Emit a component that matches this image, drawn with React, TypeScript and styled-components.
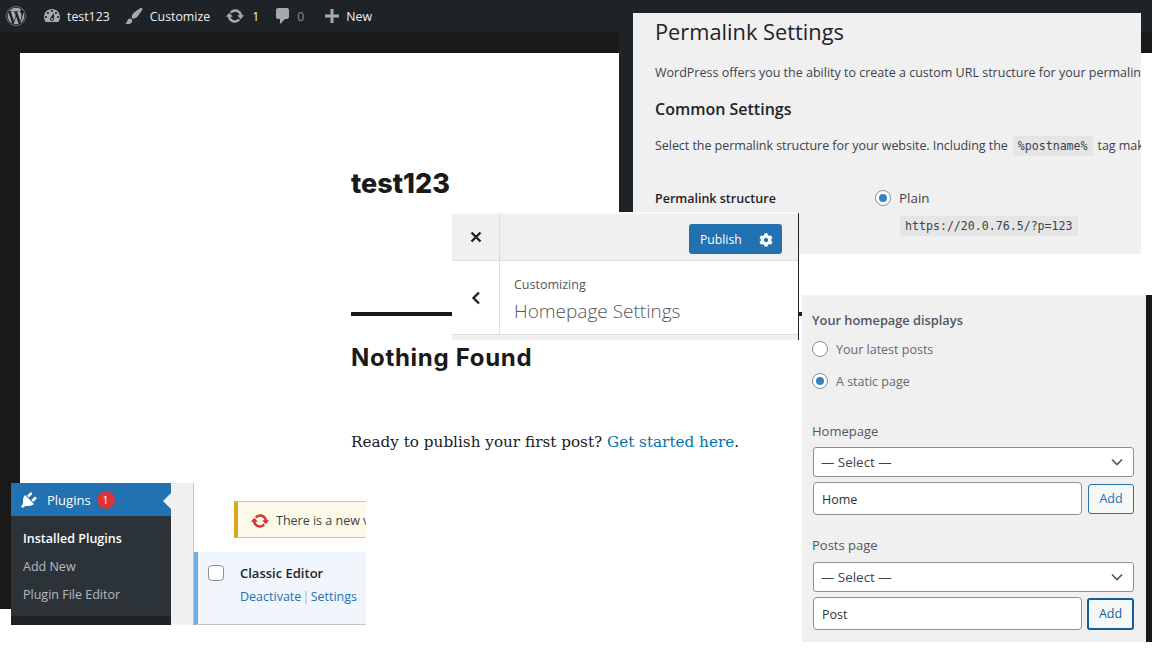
import React from 'react'
import styled, { createGlobalStyle } from 'styled-components'
import { FaWordpress, FaCog } from 'react-icons/fa'

const GlobalStyle = createGlobalStyle`
  html, body {
    margin: 0;
    padding: 0;
    background: #fff;
  }
  * { box-sizing: border-box; }
`

const UI_FONT = `"Open Sans", "Noto Sans", "Liberation Sans", sans-serif`

const Desktop = styled.div`
  position: relative;
  width: 1152px;
  height: 648px;
  overflow: hidden;
  background: #fff;
  font-family: ${UI_FONT};
  font-size: 12.5px;
  color: #3c434a;
`

// each screenshot pasted into the collage is a window on the canvas
const Win = styled.div<{ $x: number; $y: number; $w: number; $h: number }>`
  position: absolute;
  left: ${(p) => p.$x}px;
  top: ${(p) => p.$y}px;
  width: ${(p) => p.$w}px;
  height: ${(p) => p.$h}px;
  overflow: hidden;
`

const Svg20 = styled.svg<{ $size: number; $color: string }>`
  width: ${(p) => p.$size}px;
  height: ${(p) => p.$size}px;
  fill: ${(p) => p.$color};
  flex: none;
`

const Icon = ({ d, size = 20, color = '#a7aaad' }: { d: string; size?: number; color?: string }) => (
  <Svg20 viewBox="0 0 20 20" $size={size} $color={color}>
    <path d={d} />
  </Svg20>
)

const ICONS = {
  dashboard:
    'M3.76 16h12.48c1.1-1.37 1.76-3.11 1.76-5 0-4.42-3.58-8-8-8s-8 3.58-8 8c0 1.89.66 3.63 1.76 5zM10 4c.55 0 1 .45 1 1s-.45 1-1 1-1-.45-1-1 .45-1 1-1zM6 6c.55 0 1 .45 1 1s-.45 1-1 1-1-.45-1-1 .45-1 1-1zm8 0c.55 0 1 .45 1 1s-.45 1-1 1-1-.45-1-1 .45-1 1-1zm-5.37 5.55L12 7v6c0 1.1-.9 2-2 2s-2-.9-2-2c0-.57.24-1.08.63-1.45zM4 10c.55 0 1 .45 1 1s-.45 1-1 1-1-.45-1-1 .45-1 1-1zm12 0c.55 0 1 .45 1 1s-.45 1-1 1-1-.45-1-1 .45-1 1-1zm-5 3c0-.55-.45-1-1-1s-1 .45-1 1 .45 1 1 1 1-.45 1-1z',
  brush:
    'M18.33 3.57s.27-.8-.31-1.36c-.53-.52-1.22-.24-1.22-.24-.61.3-5.76 3.47-7.67 5.57-.86.96-2.06 3.79-1.09 4.82.92.98 3.96-.17 4.79-1 2.06-2.06 5.21-7.17 5.5-7.79zM1.4 17.65c2.37-1.56 1.46-3.41 3.23-4.64.93-.65 2.22-.62 3.08.29.63.67.8 2.57-.16 3.46-1.57 1.45-4 1.55-6.15.89z',
  update:
    'M10.2 3.28c3.53 0 6.43 2.61 6.92 6h2.08l-3.5 4-3.5-4h2.32c-.45-1.97-2.21-3.45-4.32-3.45-1.45 0-2.73.71-3.54 1.78L4.95 5.66C6.23 4.2 8.11 3.28 10.2 3.28zm-.4 13.44c-3.52 0-6.43-2.61-6.92-6H.8l3.5-4c1.17 1.33 2.33 2.67 3.5 4H5.48c.45 1.97 2.21 3.45 4.32 3.45 1.45 0 2.73-.71 3.54-1.78l1.71 1.95c-1.28 1.46-3.15 2.38-5.25 2.38z',
  comment: 'M5 2h9c1.1 0 2 .9 2 2v7c0 1.1-.9 2-2 2h-2l-5 5v-5H5c-1.1 0-2-.9-2-2V4c0-1.1.9-2 2-2z',
  plus: 'M17 8.5v3h-5.5V17h-3v-5.5H3v-3h5.5V3h3v5.5H17z',
  plugin:
    'M13.11 4.36L9.87 7.6 8 5.73l3.24-3.24c.35-.34 1.05-.2 1.56.32.52.51.66 1.21.31 1.55zm-8 1.77l.91-1.12 9.01 9.01-1.19.84c-.71.71-2.63 1.16-3.82 1.16H6.14L4.9 17.26c-.59.59-1.54.59-2.12 0-.59-.58-.59-1.53 0-2.12l1.24-1.24v-3.88c0-1.13.4-3.19 1.09-3.89zm7.26 3.97l3.24-3.24c.34-.35 1.04-.21 1.55.31.52.51.66 1.21.31 1.55l-3.24 3.25z',
}

/* admin bar */
const AdminBar = styled.div`
  height: 32px;
  background: #1d2327;
  display: flex;
  align-items: center;
  padding-left: 6px;
  color: #f0f0f1;
  font-size: 12.35px;
`

const BarItem = styled.div<{ $gap: number; $left: number; $dim?: boolean }>`
  display: flex;
  align-items: center;
  gap: ${(p) => p.$gap}px;
  margin-left: ${(p) => p.$left}px;
  color: ${(p) => (p.$dim ? '#8c8f94' : '#f0f0f1')};
`

/* site front page */
const SiteBackdrop = styled.div`
  height: 100%;
  background: #191919;
  padding: 21px 0 0 20px;
`

const SitePage = styled.div`
  height: 100%;
  background: #fff;
  padding: 113px 0 0 331px;
  color: #1a1a1a;
`

const SiteTitle = styled.div`
  font-family: Inter, sans-serif;
  font-size: 27px;
  font-weight: 800;
  line-height: 36px;
`

const Rule = styled.div`
  width: 470px;
  height: 4px;
  background: #191919;
  margin: 110px 0 26px;
`

const NothingFound = styled.div`
  font-family: Inter, sans-serif;
  font-size: 24px;
  font-weight: 700;
  letter-spacing: 0.7px;
  line-height: 32px;
`

const Ready = styled.div`
  font-family: "DejaVu Serif", serif;
  font-size: 15.22px;
  line-height: 24px;
  margin-top: 56px;
`

const SiteLink = styled.span`
  color: #0073aa;
`

/* permalink settings */
const PermalinkPanel = styled.div`
  height: 100%;
  background: #f0f0f1;
  border-left: 14px solid #1d2327;
  padding: 0 0 0 22px;
  white-space: nowrap;
  display: flex;
  flex-direction: column;
`

const PageTitle = styled.div`
  font-size: 21.8px;
  line-height: 37px;
  color: #1d2327;
`

const Para = styled.div<{ $top: number; $tight?: boolean }>`
  margin-top: ${(p) => p.$top}px;
  line-height: 20px;
  display: flex;
  align-items: center;
  letter-spacing: ${(p) => (p.$tight ? '-0.05px' : 'normal')};
`

const SectionTitle = styled.div`
  margin-top: 14px;
  font-size: 16px;
  font-weight: 600;
  line-height: 24px;
  color: #1d2327;
`

const Code = styled.span<{ $wide?: boolean }>`
  font-family: "DejaVu Sans Mono", monospace;
  font-size: 11.6px;
  line-height: 20px;
  letter-spacing: 0;
  background: #e5e5e5;
  color: #3c434a;
  padding: 0 5px;
  margin: 0 ${(p) => (p.$wide ? '0' : '5px')};
`

const StructureRow = styled.div`
  margin-top: 33px;
  display: grid;
  grid-template-columns: 220px 1fr;
  line-height: 20px;
`

const StructureLabel = styled.div`
  font-weight: 600;
  color: #1d2327;
`

const PlainRow = styled.div`
  display: flex;
  align-items: center;
  gap: 8px;
  height: 18px;
  font-size: 13.4px;
  font-weight: 500;
`

const PlainCode = styled.div`
  margin: 9px 0 0 25px;
  display: flex;
`

const Radio = styled.span<{ $on?: boolean }>`
  position: relative;
  width: 16px;
  height: 16px;
  flex: none;
  border-radius: 50%;
  border: 1px solid #8c8f94;
  background: #fff;
  &::after {
    content: '';
    display: ${(p) => (p.$on ? 'block' : 'none')};
    position: absolute;
    inset: 3px;
    border-radius: 50%;
    background: #3582c4;
  }
`

/* customizer header */
const CustomizerPanel = styled.div`
  height: 100%;
  background: #f0f0f1;
  border-top: 2px solid #fbfbfb;
  border-right: 1px solid #1d2327;
`

const CustomizerRow = styled.div<{ $h: number; $white?: boolean }>`
  height: ${(p) => p.$h}px;
  display: grid;
  grid-template-columns: 48px 1fr;
  background: ${(p) => (p.$white ? '#fff' : '#f0f0f1')};
  border-bottom: 1px solid #dcdcde;
`

const IconCell = styled.div`
  display: flex;
  align-items: center;
  justify-content: center;
  border-right: 1px solid #dcdcde;
`

const PublishCell = styled.div`
  display: flex;
  align-items: flex-start;
  justify-content: flex-end;
  padding: 10px 16px 0 0;
`

const PublishButton = styled.div`
  width: 93px;
  height: 30px;
  background: #2271b1;
  border-radius: 3px;
  color: #fff;
  font-size: 12.2px;
  display: flex;
  align-items: center;
  justify-content: space-between;
  padding: 1px 9px 0 11px;
`

const TitleCell = styled.div`
  padding: 15px 0 0 14px;
`

const Customizing = styled.div`
  font-size: 12.5px;
  line-height: 18px;
  color: #50575e;
`

const SectionName = styled.div`
  font-size: 19px;
  font-weight: 300;
  line-height: 34px;
  color: #50575e;
`

/* plugins screen */
const PluginsLayout = styled.div`
  height: 100%;
  display: grid;
  grid-template-columns: 160px 22px 1fr;
`

const AdminMenu = styled.div`
  background: #1d2327;
`

const MenuHead = styled.div`
  position: relative;
  height: 33px;
  background: #2271b1;
  color: #fff;
  display: flex;
  align-items: center;
  gap: 8px;
  padding-left: 8px;
  font-size: 13px;
  &::after {
    content: '';
    position: absolute;
    right: 0;
    top: 10px;
    border: 8px solid transparent;
    border-right-color: #f0f0f1;
    border-left-width: 0;
  }
`

const Badge = styled.span`
  width: 18px;
  height: 18px;
  margin-left: -2px;
  border-radius: 50%;
  background: #d63638;
  color: #fff;
  font-size: 10.5px;
  text-align: center;
  line-height: 18px;
`

const SubMenu = styled.div`
  height: 100px;
  padding: 9px 12px 0;
  background: #2c3338;
`

const SubItem = styled.div<{ $active?: boolean }>`
  height: 28px;
  line-height: 28px;
  font-weight: ${(p) => (p.$active ? 600 : 400)};
  color: ${(p) => (p.$active ? '#fff' : 'rgba(240, 246, 252, 0.7)')};
`

const MenuGutter = styled.div`
  background: #f0f0f1;
`

const PluginsMain = styled.div`
  border-left: 1px solid #c3c4c7;
  background: #fff;
  padding-top: 18px;
  white-space: nowrap;
  overflow: hidden;
`

const Notice = styled.div`
  height: 37px;
  margin-left: 40px;
  background: #fcf9e8;
  border: 1px solid #c3c4c7;
  border-right: 0;
  border-left: 4px solid #dba617;
  display: flex;
  align-items: center;
  gap: 6px;
  padding: 2px 0 0 12px;
`

const PluginRow = styled.div`
  height: 73px;
  margin-top: 14px;
  background: #f0f6fc;
  border-left: 4px solid #72aee6;
  border-bottom: 1px solid #c3c4c7;
  display: flex;
  padding: 13px 0 0 10px;
  gap: 16px;
`

const Checkbox = styled.span`
  width: 16px;
  height: 16px;
  background: #fff;
  border: 1px solid #8c8f94;
  border-radius: 4px;
`

const PluginName = styled.div`
  font-size: 13px;
  font-weight: 600;
  line-height: 16px;
  color: #1d2327;
`

const PluginActions = styled.div`
  margin-top: 7px;
  line-height: 17px;
  color: #2271b1;
`

const Sep = styled.span`
  color: #a7aaad;
  margin: 0 -2px;
`

/* homepage settings */
const HomepagePanel = styled.div`
  height: 100%;
  background: #f0f0f1;
  border-right: 6px solid #191919;
  padding: 16px 0 0 10px;
  display: flex;
  flex-direction: column;
`

const FieldTitle = styled.div`
  font-size: 12.8px;
  font-weight: 600;
  line-height: 18px;
  color: #50575e;
`

const RadioRow = styled.div<{ $top: number }>`
  display: flex;
  align-items: center;
  gap: 8px;
  height: 18px;
  margin-top: ${(p) => p.$top}px;
  color: #646970;
`

const FieldLabel = styled.div<{ $top: number }>`
  margin-top: ${(p) => p.$top}px;
  font-size: 13px;
  line-height: 18px;
  font-weight: 500;
  color: #50575e;
`

const SelectBox = styled.div<{ $top: number }>`
  width: 321px;
  height: 30px;
  margin: ${(p) => p.$top}px 0 0 1px;
  background: #fff;
  border: 1px solid #8c8f94;
  border-radius: 3px;
  font-size: 13.4px;
  display: flex;
  align-items: center;
  justify-content: space-between;
  padding: 0 10px 0 7px;
`

const InputRow = styled.div`
  display: flex;
  align-items: center;
  gap: 6px;
  margin: 5px 0 0 1px;
`

const TextInput = styled.div`
  width: 269px;
  height: 33px;
  background: #fff;
  border: 1px solid #8c8f94;
  border-radius: 4px;
  display: flex;
  align-items: center;
  padding: 1px 0 0 8px;
  color: #2c3338;
`

const AddButton = styled.div<{ $focus?: boolean }>`
  width: ${(p) => (p.$focus ? 47 : 46)}px;
  height: ${(p) => (p.$focus ? 32 : 30)}px;
  margin-left: ${(p) => (p.$focus ? -1 : 0)}px;
  background: #f6f7f7;
  border: ${(p) => (p.$focus ? 2 : 1)}px solid ${(p) => (p.$focus ? '#135e96' : '#2271b1')};
  border-radius: 3px;
  color: ${(p) => (p.$focus ? '#135e96' : '#2271b1')};
  display: flex;
  align-items: center;
  justify-content: center;
`

const Chevron = () => (
  <svg width="12" height="8" viewBox="0 0 12 8" fill="none" stroke="#50575e" strokeWidth="1.6">
    <path d="M1 1.5l5 5 5-5" />
  </svg>
)

const SelectField = ({ top }: { top: number }) => (
  <SelectBox $top={top}>
    <span>— Select —</span>
    <Chevron />
  </SelectBox>
)

export default function App() {
  return (
    <Desktop>
      <GlobalStyle />

      <Win $x={0} $y={0} $w={1152} $h={32}>
        <AdminBar>
          <FaWordpress size={20} color="#a7aaad" />
          <BarItem $gap={5} $left={16}>
            <Icon d={ICONS.dashboard} />
            test123
          </BarItem>
          <BarItem $gap={6} $left={14}>
            <Icon d={ICONS.brush} />
            Customize
          </BarItem>
          <BarItem $gap={7} $left={15}>
            <Icon d={ICONS.update} />1
          </BarItem>
          <BarItem $gap={4} $left={14} $dim>
            <Icon d={ICONS.comment} />0
          </BarItem>
          <BarItem $gap={4} $left={18}>
            <Icon d={ICONS.plus} color="#a7aaad" />
            New
          </BarItem>
        </AdminBar>
      </Win>

      <Win $x={0} $y={32} $w={1152} $h={577}>
        <SiteBackdrop>
          <SitePage>
            <SiteTitle>test123</SiteTitle>
            <Rule />
            <NothingFound>Nothing Found</NothingFound>
            <Ready>
              Ready to publish your first post? <SiteLink>Get started here</SiteLink>.
            </Ready>
          </SitePage>
        </SiteBackdrop>
      </Win>

      <Win $x={619} $y={13} $w={522} $h={241}>
        <PermalinkPanel>
          <PageTitle>Permalink Settings</PageTitle>
          <Para $top={13}>WordPress offers you the ability to create a custom URL structure for your permalinks and archives.</Para>
          <SectionTitle>Common Settings</SectionTitle>
          <Para $top={15} $tight>
            Select the permalink structure for your website. Including the <Code>%postname%</Code> tag makes links easy to
            understand.
          </Para>
          <StructureRow>
            <StructureLabel>Permalink structure</StructureLabel>
            <div>
              <PlainRow>
                <Radio $on />
                Plain
              </PlainRow>
              <PlainCode>
                <Code $wide>https://20.0.76.5/?p=123</Code>
              </PlainCode>
            </div>
          </StructureRow>
        </PermalinkPanel>
      </Win>

      <Win $x={452} $y={212} $w={347} $h={128}>
        <CustomizerPanel>
          <CustomizerRow $h={47}>
            <IconCell>
              <svg width="12" height="12" viewBox="0 0 12 12" stroke="#1d2327" strokeWidth="2.4">
                <path d="M1.5 1.5l9 9M10.5 1.5l-9 9" />
              </svg>
            </IconCell>
            <PublishCell>
              <PublishButton>
                Publish
                <FaCog size={14} color="#fff" />
              </PublishButton>
            </PublishCell>
          </CustomizerRow>
          <CustomizerRow $h={74} $white>
            <IconCell>
              <svg width="10" height="14" viewBox="0 0 10 14" fill="none" stroke="#1d2327" strokeWidth="2.4">
                <path d="M8 1.5L2.5 7 8 12.5" />
              </svg>
            </IconCell>
            <TitleCell>
              <Customizing>Customizing</Customizing>
              <SectionName>Homepage Settings</SectionName>
            </TitleCell>
          </CustomizerRow>
        </CustomizerPanel>
      </Win>

      <Win $x={11} $y={483} $w={355} $h={142}>
        <PluginsLayout>
          <AdminMenu>
            <MenuHead>
              <Icon d={ICONS.plugin} color="#fff" />
              Plugins
              <Badge>1</Badge>
            </MenuHead>
            <SubMenu>
              <SubItem $active>Installed Plugins</SubItem>
              <SubItem>Add New</SubItem>
              <SubItem>Plugin File Editor</SubItem>
            </SubMenu>
          </AdminMenu>
          <MenuGutter />
          <PluginsMain>
            <Notice>
              <Icon d={ICONS.update} color="#d63638" />
              There is a new version of Classic Editor available.
            </Notice>
            <PluginRow>
              <Checkbox />
              <div>
                <PluginName>Classic Editor</PluginName>
                <PluginActions>
                  Deactivate <Sep>|</Sep> Settings
                </PluginActions>
              </div>
            </PluginRow>
          </PluginsMain>
        </PluginsLayout>
      </Win>

      <Win $x={802} $y={295} $w={350} $h={347}>
        <HomepagePanel>
          <FieldTitle>Your homepage displays</FieldTitle>
          <RadioRow $top={11}>
            <Radio />
            Your latest posts
          </RadioRow>
          <RadioRow $top={14}>
            <Radio $on />
            A static page
          </RadioRow>
          <FieldLabel $top={32}>Homepage</FieldLabel>
          <SelectField top={7} />
          <InputRow>
            <TextInput>Home</TextInput>
            <AddButton>Add</AddButton>
          </InputRow>
          <FieldLabel $top={21}>Posts page</FieldLabel>
          <SelectField top={8} />
          <InputRow>
            <TextInput>Post</TextInput>
            <AddButton $focus>Add</AddButton>
          </InputRow>
        </HomepagePanel>
      </Win>
    </Desktop>
  )
}
